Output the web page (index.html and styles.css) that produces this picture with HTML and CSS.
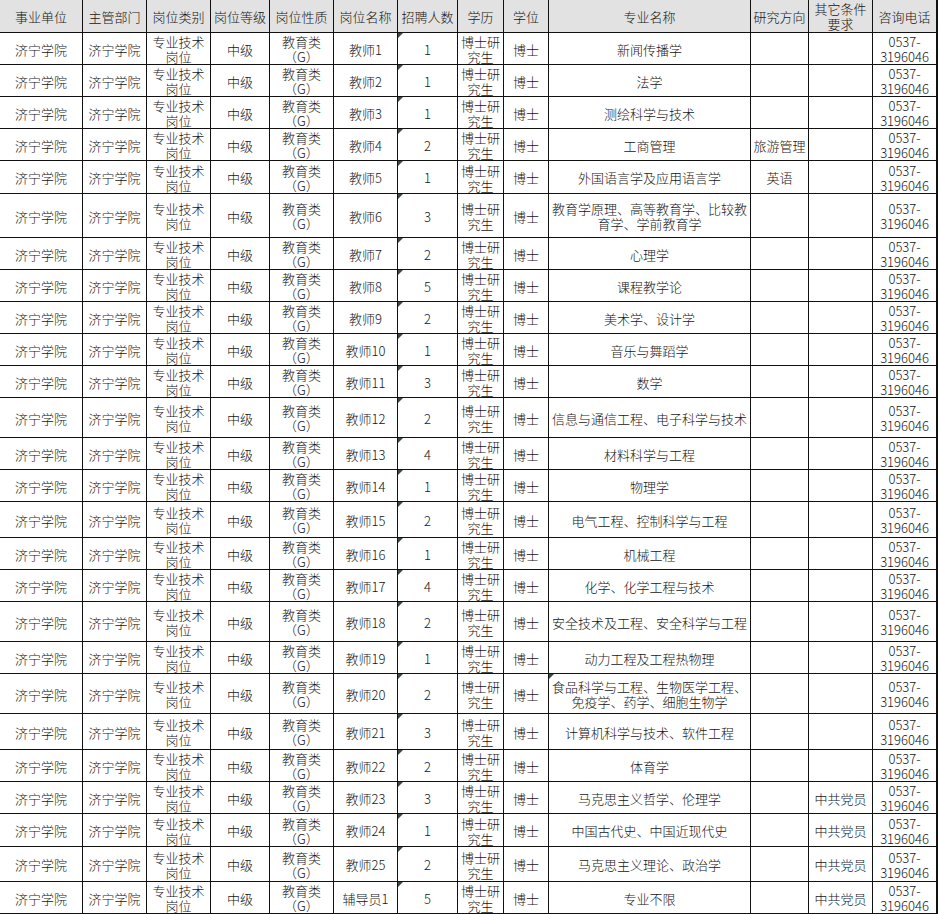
FILE: index.html
```html
<!DOCTYPE html>
<html lang="zh-CN">
<head>
<meta charset="utf-8">
<title>济宁学院招聘岗位</title>
<link rel="stylesheet" href="styles.css">
</head>
<body>
<div class="sheet">
  <div class="c hd">事业单位</div><div class="c hd">主管部门</div><div class="c hd">岗位类别</div><div class="c hd">岗位等级</div><div class="c hd">岗位性质</div><div class="c hd">岗位名称</div><div class="c hd">招聘人数</div><div class="c hd">学历</div><div class="c hd">学位</div><div class="c hd">专业名称</div><div class="c hd">研究方向</div><div class="c hd">其它条件<br>要求</div><div class="c hd">咨询电话</div>

  <div class="c">济宁学院</div><div class="c">济宁学院</div><div class="c">专业技术<br>岗位</div><div class="c">中级</div><div class="c">教育类<br>（G）</div><div class="c">教师1</div><div class="c tri">1</div><div class="c">博士研<br>究生</div><div class="c">博士</div><div class="c">新闻传播学</div><div class="c"></div><div class="c"></div><div class="c">0537-<br>3196046</div>

  <div class="c">济宁学院</div><div class="c">济宁学院</div><div class="c">专业技术<br>岗位</div><div class="c">中级</div><div class="c">教育类<br>（G）</div><div class="c">教师2</div><div class="c tri">1</div><div class="c">博士研<br>究生</div><div class="c">博士</div><div class="c">法学</div><div class="c"></div><div class="c"></div><div class="c">0537-<br>3196046</div>

  <div class="c">济宁学院</div><div class="c">济宁学院</div><div class="c">专业技术<br>岗位</div><div class="c">中级</div><div class="c">教育类<br>（G）</div><div class="c">教师3</div><div class="c tri">1</div><div class="c">博士研<br>究生</div><div class="c">博士</div><div class="c">测绘科学与技术</div><div class="c"></div><div class="c"></div><div class="c">0537-<br>3196046</div>

  <div class="c">济宁学院</div><div class="c">济宁学院</div><div class="c">专业技术<br>岗位</div><div class="c">中级</div><div class="c">教育类<br>（G）</div><div class="c">教师4</div><div class="c tri">2</div><div class="c">博士研<br>究生</div><div class="c">博士</div><div class="c">工商管理</div><div class="c">旅游管理</div><div class="c"></div><div class="c">0537-<br>3196046</div>

  <div class="c">济宁学院</div><div class="c">济宁学院</div><div class="c">专业技术<br>岗位</div><div class="c">中级</div><div class="c">教育类<br>（G）</div><div class="c">教师5</div><div class="c tri">1</div><div class="c">博士研<br>究生</div><div class="c">博士</div><div class="c">外国语言学及应用语言学</div><div class="c">英语</div><div class="c"></div><div class="c">0537-<br>3196046</div>

  <div class="c">济宁学院</div><div class="c">济宁学院</div><div class="c">专业技术<br>岗位</div><div class="c">中级</div><div class="c">教育类<br>（G）</div><div class="c">教师6</div><div class="c tri">3</div><div class="c">博士研<br>究生</div><div class="c">博士</div><div class="c">教育学原理、高等教育学、比较教<br>育学、学前教育学</div><div class="c"></div><div class="c"></div><div class="c">0537-<br>3196046</div>

  <div class="c">济宁学院</div><div class="c">济宁学院</div><div class="c">专业技术<br>岗位</div><div class="c">中级</div><div class="c">教育类<br>（G）</div><div class="c">教师7</div><div class="c tri">2</div><div class="c">博士研<br>究生</div><div class="c">博士</div><div class="c">心理学</div><div class="c"></div><div class="c"></div><div class="c">0537-<br>3196046</div>

  <div class="c">济宁学院</div><div class="c">济宁学院</div><div class="c">专业技术<br>岗位</div><div class="c">中级</div><div class="c">教育类<br>（G）</div><div class="c">教师8</div><div class="c tri">5</div><div class="c">博士研<br>究生</div><div class="c">博士</div><div class="c">课程教学论</div><div class="c"></div><div class="c"></div><div class="c">0537-<br>3196046</div>

  <div class="c">济宁学院</div><div class="c">济宁学院</div><div class="c">专业技术<br>岗位</div><div class="c">中级</div><div class="c">教育类<br>（G）</div><div class="c">教师9</div><div class="c tri">2</div><div class="c">博士研<br>究生</div><div class="c">博士</div><div class="c">美术学、设计学</div><div class="c"></div><div class="c"></div><div class="c">0537-<br>3196046</div>

  <div class="c">济宁学院</div><div class="c">济宁学院</div><div class="c">专业技术<br>岗位</div><div class="c">中级</div><div class="c">教育类<br>（G）</div><div class="c">教师10</div><div class="c tri">1</div><div class="c">博士研<br>究生</div><div class="c">博士</div><div class="c">音乐与舞蹈学</div><div class="c"></div><div class="c"></div><div class="c">0537-<br>3196046</div>

  <div class="c">济宁学院</div><div class="c">济宁学院</div><div class="c">专业技术<br>岗位</div><div class="c">中级</div><div class="c">教育类<br>（G）</div><div class="c">教师11</div><div class="c tri">3</div><div class="c">博士研<br>究生</div><div class="c">博士</div><div class="c">数学</div><div class="c"></div><div class="c"></div><div class="c">0537-<br>3196046</div>

  <div class="c">济宁学院</div><div class="c">济宁学院</div><div class="c">专业技术<br>岗位</div><div class="c">中级</div><div class="c">教育类<br>（G）</div><div class="c">教师12</div><div class="c tri">2</div><div class="c">博士研<br>究生</div><div class="c">博士</div><div class="c">信息与通信工程、电子科学与技术</div><div class="c"></div><div class="c"></div><div class="c">0537-<br>3196046</div>

  <div class="c">济宁学院</div><div class="c">济宁学院</div><div class="c">专业技术<br>岗位</div><div class="c">中级</div><div class="c">教育类<br>（G）</div><div class="c">教师13</div><div class="c tri">4</div><div class="c">博士研<br>究生</div><div class="c">博士</div><div class="c">材料科学与工程</div><div class="c"></div><div class="c"></div><div class="c">0537-<br>3196046</div>

  <div class="c">济宁学院</div><div class="c">济宁学院</div><div class="c">专业技术<br>岗位</div><div class="c">中级</div><div class="c">教育类<br>（G）</div><div class="c">教师14</div><div class="c tri">1</div><div class="c">博士研<br>究生</div><div class="c">博士</div><div class="c">物理学</div><div class="c"></div><div class="c"></div><div class="c">0537-<br>3196046</div>

  <div class="c">济宁学院</div><div class="c">济宁学院</div><div class="c">专业技术<br>岗位</div><div class="c">中级</div><div class="c">教育类<br>（G）</div><div class="c">教师15</div><div class="c tri">2</div><div class="c">博士研<br>究生</div><div class="c">博士</div><div class="c">电气工程、控制科学与工程</div><div class="c"></div><div class="c"></div><div class="c">0537-<br>3196046</div>

  <div class="c">济宁学院</div><div class="c">济宁学院</div><div class="c">专业技术<br>岗位</div><div class="c">中级</div><div class="c">教育类<br>（G）</div><div class="c">教师16</div><div class="c tri">1</div><div class="c">博士研<br>究生</div><div class="c">博士</div><div class="c">机械工程</div><div class="c"></div><div class="c"></div><div class="c">0537-<br>3196046</div>

  <div class="c">济宁学院</div><div class="c">济宁学院</div><div class="c">专业技术<br>岗位</div><div class="c">中级</div><div class="c">教育类<br>（G）</div><div class="c">教师17</div><div class="c tri">4</div><div class="c">博士研<br>究生</div><div class="c">博士</div><div class="c">化学、化学工程与技术</div><div class="c"></div><div class="c"></div><div class="c">0537-<br>3196046</div>

  <div class="c">济宁学院</div><div class="c">济宁学院</div><div class="c">专业技术<br>岗位</div><div class="c">中级</div><div class="c">教育类<br>（G）</div><div class="c">教师18</div><div class="c tri">2</div><div class="c">博士研<br>究生</div><div class="c">博士</div><div class="c">安全技术及工程、安全科学与工程</div><div class="c"></div><div class="c"></div><div class="c">0537-<br>3196046</div>

  <div class="c">济宁学院</div><div class="c">济宁学院</div><div class="c">专业技术<br>岗位</div><div class="c">中级</div><div class="c">教育类<br>（G）</div><div class="c">教师19</div><div class="c tri">1</div><div class="c">博士研<br>究生</div><div class="c">博士</div><div class="c">动力工程及工程热物理</div><div class="c"></div><div class="c"></div><div class="c">0537-<br>3196046</div>

  <div class="c">济宁学院</div><div class="c">济宁学院</div><div class="c">专业技术<br>岗位</div><div class="c">中级</div><div class="c">教育类<br>（G）</div><div class="c">教师20</div><div class="c tri">2</div><div class="c">博士研<br>究生</div><div class="c">博士</div><div class="c tri">食品科学与工程、生物医学工程、<br>免疫学、药学、细胞生物学</div><div class="c"></div><div class="c"></div><div class="c">0537-<br>3196046</div>

  <div class="c">济宁学院</div><div class="c">济宁学院</div><div class="c">专业技术<br>岗位</div><div class="c">中级</div><div class="c">教育类<br>（G）</div><div class="c">教师21</div><div class="c tri">3</div><div class="c">博士研<br>究生</div><div class="c">博士</div><div class="c">计算机科学与技术、软件工程</div><div class="c"></div><div class="c"></div><div class="c">0537-<br>3196046</div>

  <div class="c">济宁学院</div><div class="c">济宁学院</div><div class="c">专业技术<br>岗位</div><div class="c">中级</div><div class="c">教育类<br>（G）</div><div class="c">教师22</div><div class="c tri">2</div><div class="c">博士研<br>究生</div><div class="c">博士</div><div class="c">体育学</div><div class="c"></div><div class="c"></div><div class="c">0537-<br>3196046</div>

  <div class="c">济宁学院</div><div class="c">济宁学院</div><div class="c">专业技术<br>岗位</div><div class="c">中级</div><div class="c">教育类<br>（G）</div><div class="c">教师23</div><div class="c tri">3</div><div class="c">博士研<br>究生</div><div class="c">博士</div><div class="c">马克思主义哲学、伦理学</div><div class="c"></div><div class="c">中共党员</div><div class="c">0537-<br>3196046</div>

  <div class="c">济宁学院</div><div class="c">济宁学院</div><div class="c">专业技术<br>岗位</div><div class="c">中级</div><div class="c">教育类<br>（G）</div><div class="c">教师24</div><div class="c tri">1</div><div class="c">博士研<br>究生</div><div class="c">博士</div><div class="c">中国古代史、中国近现代史</div><div class="c"></div><div class="c">中共党员</div><div class="c">0537-<br>3196046</div>

  <div class="c">济宁学院</div><div class="c">济宁学院</div><div class="c">专业技术<br>岗位</div><div class="c">中级</div><div class="c">教育类<br>（G）</div><div class="c">教师25</div><div class="c tri">2</div><div class="c">博士研<br>究生</div><div class="c">博士</div><div class="c">马克思主义理论、政治学</div><div class="c"></div><div class="c">中共党员</div><div class="c">0537-<br>3196046</div>

  <div class="c">济宁学院</div><div class="c">济宁学院</div><div class="c">专业技术<br>岗位</div><div class="c">中级</div><div class="c">教育类<br>（G）</div><div class="c">辅导员1</div><div class="c tri">5</div><div class="c">博士研<br>究生</div><div class="c">博士</div><div class="c">专业不限</div><div class="c"></div><div class="c">中共党员</div><div class="c">0537-<br>3196046</div>
</div>
</body>
</html>
```

FILE: styles.css
```css
html, body {
  margin: 0;
  padding: 0;
  background: #ffffff;
}

.sheet {
  display: grid;
  width: 936px;
  grid-template-columns: 82px 63px 63px 58px 63px 63px 59px 45px 44px 201px 57px 63px 63px;
  grid-template-rows: 32px 31px 31px 31px 31px 32px 43px 31px 31px 31px 31px 31px 39px 31px 31px 35px 31px 31px 39px 31px 39px 35px 31px 31px 32px 34px 31px;
  gap: 1px;
  padding: 0 2px 1px 0;
  background: #111111;
  font-family: "Noto Sans CJK SC", "Noto Sans", sans-serif;
  font-size: 13px;
  font-weight: 300;
  line-height: 15px;
  color: #151515;
}

.c {
  position: relative;
  display: flex;
  align-items: center;
  justify-content: center;
  text-align: center;
  white-space: nowrap;
  overflow: hidden;
  background: #ffffff;
  padding-top: 1px;
  box-sizing: border-box;
}

.hd {
  background: #e2e2e2;
  padding-top: 0;
}

.tri::before {
  content: "";
  position: absolute;
  left: 0;
  top: 0;
  width: 0;
  height: 0;
  border-top: 5px solid #3a4a40;
  border-right: 5px solid transparent;
}
```
